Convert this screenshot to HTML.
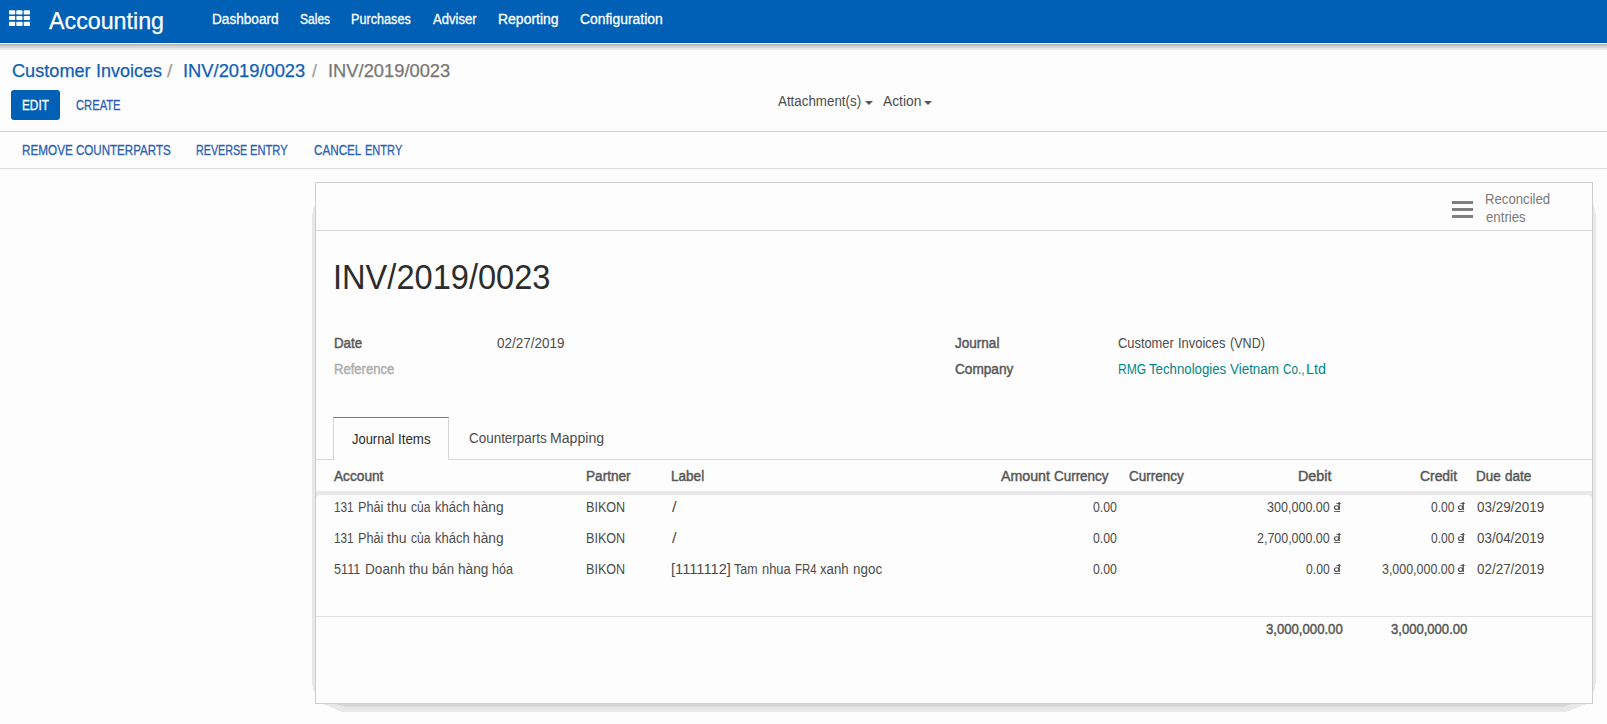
<!DOCTYPE html>
<html>
<head>
<meta charset="utf-8">
<title>INV/2019/0023 - Odoo</title>
<style>
html,body{margin:0;padding:0;}
body{width:1607px;height:724px;overflow:hidden;background:#fdfdfd;font-family:"Liberation Sans",sans-serif;font-size:13px;color:#4c4c4c;position:relative;}
.t{position:absolute;white-space:nowrap;line-height:1;transform-origin:0 0;}
.nav{-webkit-text-stroke:.3px #fff;}
.brand{-webkit-text-stroke:.25px #fff;}
.cap{-webkit-text-stroke:.3px currentColor;}
.bc{-webkit-text-stroke:.25px currentColor;}
.x{position:absolute;}
#nav{left:0;top:0;width:1607px;height:43px;background:#0060b6;}
#navsh{left:0;top:43px;width:1607px;height:7px;background:linear-gradient(to bottom,#fff 0,#fff 1px,#b4b4b4 1px,#b4b4b4 2px,#c6c6c6 2px,#c6c6c6 3px,#d5d5d5 3px,#d7d7d7 5px,#e7e7e7 5px,#ececec 7px);}
.hl{position:absolute;left:0;width:1607px;height:1px;}
.sl{position:absolute;height:1px;background:#d9d9d9;}
.car{position:absolute;width:0;height:0;border-left:4px solid transparent;border-right:4px solid transparent;border-top:4px solid #555;}
</style>
</head>
<body>
<!-- NAVBAR -->
<div class="x" id="nav"></div>
<div class="x" style="left:0;top:42px;width:1607px;height:1px;background:#0055ae"></div>
<div class="x" id="navsh"></div>
<svg class="x" style="left:9px;top:10px" width="22" height="17" viewBox="0 0 22 17">
  <g fill="#fff">
    <rect x="0" y="0.2" width="6.2" height="4.4" rx=".8"/><rect x="7.3" y="0.2" width="6.2" height="4.4" rx=".8"/><rect x="14.7" y="0.2" width="6.3" height="4.4" rx=".8"/>
    <rect x="0" y="6.1" width="6.2" height="3.9" rx=".8"/><rect x="7.3" y="6.1" width="6.2" height="3.9" rx=".8"/><rect x="14.7" y="6.1" width="6.3" height="3.9" rx=".8"/>
    <rect x="0" y="11.7" width="6.2" height="4.4" rx=".8"/><rect x="7.3" y="11.7" width="6.2" height="4.4" rx=".8"/><rect x="14.7" y="11.7" width="6.3" height="4.4" rx=".8"/>
  </g>
</svg>

<!-- CONTROL PANEL -->
<div class="x" style="left:11px;top:90px;width:49px;height:30px;background:#0060b6;border-radius:3px"></div>
<div class="car" style="left:865px;top:101px"></div>
<div class="car" style="left:924px;top:101px"></div>
<div class="hl" style="top:131px;background:#cdcdcd"></div>
<div class="hl" style="top:168px;background:#dedede"></div>

<!-- SHEET shadows -->
<svg class="x" style="left:300px;top:190px" width="1307" height="534" viewBox="300 190 1307 534" shape-rendering="crispEdges">
  <polygon fill="#e8e8e8" points="315,205 315,692 314,692 312,682 312,215 314,206"/>
  <polygon fill="#e8e8e8" points="1593,205 1593,692 1594,692 1596,682 1596,215 1594,206"/>
  <polygon fill="#e8e8e8" points="323,704 1586,704 1566,712 342,712"/>
  <polygon fill="#d6d6d6" points="335,704 1573,704 1562,707 346,707"/>
</svg>
<!-- SHEET -->
<div class="x" style="left:315px;top:182px;width:1276px;height:520px;border:1px solid #cdcdcd;background:#fdfdfd"></div>
<div class="sl" style="left:316px;top:230px;width:1276px"></div>

<!-- stat button icon -->
<div class="x" style="left:1452px;top:201px;width:21px;height:3px;background:#7f7f7f"></div>
<div class="x" style="left:1452px;top:208px;width:21px;height:3px;background:#7f7f7f"></div>
<div class="x" style="left:1452px;top:215px;width:21px;height:3px;background:#7f7f7f"></div>

<!-- tabs -->
<div class="sl" style="left:316px;top:459px;width:1276px"></div>
<div class="x" style="left:333px;top:417px;width:116px;height:43px;border:1px solid #d6d6d6;border-top-color:#8f6d8a;border-bottom:none;background:#fdfdfd;box-sizing:border-box"></div>

<!-- table -->
<div class="x" style="left:316px;top:491px;width:1276px;height:4px;background:#e9e9e9"></div>
<div class="x" style="left:316px;top:495px;width:5px;height:3px;background:#e9e9e9"></div>
<div class="x" style="left:316px;top:495px;width:12px;height:6px;background:#fdfdfd;border-top-left-radius:5px 3px"></div>
<div class="x" style="left:1587px;top:495px;width:5px;height:3px;background:#e9e9e9"></div>
<div class="x" style="left:1580px;top:495px;width:12px;height:6px;background:#fdfdfd;border-top-right-radius:5px 3px"></div>
<div class="sl" style="left:316px;top:616px;width:1276px;background:#e2e2e2"></div>

<div class="t brand" style="left:49.30px;top:7px;font-size:24px;line-height:27px;color:#fff;transform:scaleX(0.9685)">Accounting</div>
<div class="t nav" style="left:212.43px;top:11px;font-size:14px;line-height:16px;color:#fff;transform:scaleX(0.9715)">Dashboard</div>
<div class="t nav" style="left:300.10px;top:11px;font-size:14px;line-height:16px;color:#fff;transform:scaleX(0.8595)">Sales</div>
<div class="t nav" style="left:351.10px;top:11px;font-size:14px;line-height:16px;color:#fff;transform:scaleX(0.9041)">Purchases</div>
<div class="t nav" style="left:433.00px;top:11px;font-size:14px;line-height:16px;color:#fff;transform:scaleX(0.9336)">Adviser</div>
<div class="t nav" style="left:497.70px;top:11px;font-size:14px;line-height:16px;color:#fff;transform:scaleX(0.9980)">Reporting</div>
<div class="t nav" style="left:579.60px;top:11px;font-size:14px;line-height:16px;color:#fff;transform:scaleX(0.9929)">Configuration</div>
<div class="t bc" style="left:12.40px;top:60px;font-size:18.4px;line-height:21px;color:#1060b2;transform:scaleX(0.9863)">Customer</div>
<div class="t bc" style="left:95.62px;top:60px;font-size:18.4px;line-height:21px;color:#1060b2;transform:scaleX(0.9763)">Invoices</div>
<div class="t bc" style="left:167.20px;top:60px;font-size:18.4px;line-height:21px;color:#a0a0a0;transform:scaleX(1.0500)">/</div>
<div class="t bc" style="left:183.20px;top:60px;font-size:18.4px;line-height:21px;color:#1060b2;transform:scaleX(0.9961)">INV/2019/0023</div>
<div class="t bc" style="left:311.60px;top:60px;font-size:18.4px;line-height:21px;color:#a0a0a0;transform:scaleX(0.9667)">/</div>
<div class="t bc" style="left:327.60px;top:60px;font-size:18.4px;line-height:21px;color:#777;transform:scaleX(0.9961)">INV/2019/0023</div>
<div class="t cap" style="left:22.06px;top:97px;font-size:14px;line-height:16px;color:#fff;transform:scaleX(0.8424)">EDIT</div>
<div class="t cap" style="left:75.70px;top:97px;font-size:14px;line-height:16px;color:#2a5fb4;transform:scaleX(0.7995)">CREATE</div>
<div class="t" style="left:778.30px;top:93px;font-size:14px;line-height:16px;color:#4c4c4c;transform:scaleX(0.9540)">Attachment(s)</div>
<div class="t" style="left:883.20px;top:93px;font-size:14px;line-height:16px;color:#4c4c4c;transform:scaleX(0.9863)">Action</div>
<div class="t cap" style="left:22.26px;top:142px;font-size:14px;line-height:16px;color:#2a5fb4;transform:scaleX(0.8393)">REMOVE</div>
<div class="t cap" style="left:76.20px;top:142px;font-size:14px;line-height:16px;color:#2a5fb4;transform:scaleX(0.8261)">COUNTERPARTS</div>
<div class="t cap" style="left:195.83px;top:142px;font-size:14px;line-height:16px;color:#2a5fb4;transform:scaleX(0.7656)">REVERSE</div>
<div class="t cap" style="left:250.10px;top:142px;font-size:14px;line-height:16px;color:#2a5fb4;transform:scaleX(0.7982)">ENTRY</div>
<div class="t cap" style="left:313.90px;top:142px;font-size:14px;line-height:16px;color:#2a5fb4;transform:scaleX(0.8332)">CANCEL</div>
<div class="t cap" style="left:364.81px;top:142px;font-size:14px;line-height:16px;color:#2a5fb4;transform:scaleX(0.7896)">ENTRY</div>
<div class="t" style="left:1485.06px;top:191px;font-size:14px;line-height:16px;color:#7a7a7a;transform:scaleX(0.9411)">Reconciled</div>
<div class="t" style="left:1485.70px;top:209px;font-size:14px;line-height:16px;color:#7a7a7a;transform:scaleX(0.9448)">entries</div>
<div class="t" style="left:332.97px;top:258px;font-size:34.6px;line-height:38px;color:#2c2c2c;transform:scaleX(0.9427)">INV/2019/0023</div>
<div class="t" style="left:333.50px;top:335px;font-size:14px;line-height:16px;color:#575757;transform:scaleX(0.9518);-webkit-text-stroke:.45px #575757">Date</div>
<div class="t" style="left:497.20px;top:335px;font-size:14px;line-height:16px;color:#4c4c4c;transform:scaleX(0.9633)">02/27/2019</div>
<div class="t" style="left:333.52px;top:361px;font-size:14px;line-height:16px;color:#adadad;transform:scaleX(0.9325);-webkit-text-stroke:.45px #adadad">Reference</div>
<div class="t" style="left:954.65px;top:335px;font-size:14px;line-height:16px;color:#575757;transform:scaleX(0.9671);-webkit-text-stroke:.45px #575757">Journal</div>
<div class="t" style="left:1118.30px;top:335px;font-size:14px;line-height:16px;color:#4c4c4c;transform:scaleX(0.9194)">Customer</div>
<div class="t" style="left:1178.07px;top:335px;font-size:14px;line-height:16px;color:#4c4c4c;transform:scaleX(0.9254)">Invoices</div>
<div class="t" style="left:1229.90px;top:335px;font-size:14px;line-height:16px;color:#4c4c4c;transform:scaleX(0.9000)">(VND)</div>
<div class="t" style="left:954.65px;top:361px;font-size:14px;line-height:16px;color:#575757;transform:scaleX(0.9730);-webkit-text-stroke:.45px #575757">Company</div>
<div class="t" style="left:1118.04px;top:361px;font-size:14px;line-height:16px;color:#00868a;transform:scaleX(0.8644)">RMG</div>
<div class="t" style="left:1149.40px;top:361px;font-size:14px;line-height:16px;color:#00868a;transform:scaleX(0.9446)">Technologies</div>
<div class="t" style="left:1229.90px;top:361px;font-size:14px;line-height:16px;color:#00868a;transform:scaleX(0.9575)">Vietnam</div>
<div class="t" style="left:1282.50px;top:361px;font-size:14px;line-height:16px;color:#00868a;transform:scaleX(0.8351)">Co.,</div>
<div class="t" style="left:1306.48px;top:361px;font-size:14px;line-height:16px;color:#00868a;transform:scaleX(1.0240)">Ltd</div>
<div class="t" style="left:352.40px;top:431px;font-size:14px;line-height:16px;color:#2c2c2c;transform:scaleX(0.9234)">Journal</div>
<div class="t" style="left:398.25px;top:431px;font-size:14px;line-height:16px;color:#2c2c2c;transform:scaleX(0.9510)">Items</div>
<div class="t" style="left:469.30px;top:430px;font-size:14px;line-height:16px;color:#4c4c4c;transform:scaleX(0.9601)">Counterparts</div>
<div class="t" style="left:549.99px;top:430px;font-size:14px;line-height:16px;color:#4c4c4c;transform:scaleX(1.0074)">Mapping</div>
<div class="t" style="left:334.45px;top:468px;font-size:14px;line-height:16px;color:#575757;transform:scaleX(0.9764);-webkit-text-stroke:.45px #575757">Account</div>
<div class="t" style="left:586.38px;top:468px;font-size:14px;line-height:16px;color:#575757;transform:scaleX(0.9724);-webkit-text-stroke:.45px #575757">Partner</div>
<div class="t" style="left:671.48px;top:468px;font-size:14px;line-height:16px;color:#575757;transform:scaleX(0.9685);-webkit-text-stroke:.45px #575757">Label</div>
<div class="t" style="left:1000.85px;top:468px;font-size:14px;line-height:16px;color:#575757;transform:scaleX(1.0133);-webkit-text-stroke:.45px #575757">Amount</div>
<div class="t" style="left:1054.05px;top:468px;font-size:14px;line-height:16px;color:#575757;transform:scaleX(0.9596);-webkit-text-stroke:.45px #575757">Currency</div>
<div class="t" style="left:1129.05px;top:468px;font-size:14px;line-height:16px;color:#575757;transform:scaleX(0.9649);-webkit-text-stroke:.45px #575757">Currency</div>
<div class="t" style="left:1297.82px;top:468px;font-size:14px;line-height:16px;color:#575757;transform:scaleX(1.0254);-webkit-text-stroke:.45px #575757">Debit</div>
<div class="t" style="left:1419.65px;top:468px;font-size:14px;line-height:16px;color:#575757;transform:scaleX(0.9905);-webkit-text-stroke:.45px #575757">Credit</div>
<div class="t" style="left:1476.39px;top:468px;font-size:14px;line-height:16px;color:#575757;transform:scaleX(0.9600);-webkit-text-stroke:.45px #575757">Due</div>
<div class="t" style="left:1505.25px;top:468px;font-size:14px;line-height:16px;color:#575757;transform:scaleX(0.9650);-webkit-text-stroke:.45px #575757">date</div>
<div class="t" style="left:1265.75px;top:621px;font-size:14px;line-height:16px;color:#575757;transform:scaleX(0.9383);-webkit-text-stroke:.45px #575757">3,000,000.00</div>
<div class="t" style="left:1390.75px;top:621px;font-size:14px;line-height:16px;color:#575757;transform:scaleX(0.9334);-webkit-text-stroke:.45px #575757">3,000,000.00</div>
<div class="t" style="left:333.56px;top:499px;font-size:14px;line-height:16px;color:#4c4c4c;transform:scaleX(0.8417)">131</div>
<div class="t" style="left:357.99px;top:499px;font-size:14px;line-height:16px;color:#4c4c4c;transform:scaleX(0.9067)">Phải</div>
<div class="t" style="left:387.00px;top:499px;font-size:14px;line-height:16px;color:#4c4c4c;transform:scaleX(1.0013)">thu</div>
<div class="t" style="left:410.60px;top:499px;font-size:14px;line-height:16px;color:#4c4c4c;transform:scaleX(0.8602)">của</div>
<div class="t" style="left:434.90px;top:499px;font-size:14px;line-height:16px;color:#4c4c4c;transform:scaleX(0.9269)">khách</div>
<div class="t" style="left:473.40px;top:499px;font-size:14px;line-height:16px;color:#4c4c4c;transform:scaleX(0.9816)">hàng</div>
<div class="t" style="left:671.80px;top:499px;font-size:14px;line-height:16px;color:#4c4c4c;transform:scaleX(1.1750)">/</div>
<div class="t" style="left:586.00px;top:499px;font-size:14px;line-height:16px;color:#4c4c4c;transform:scaleX(0.8998)">BIKON</div>
<div class="t" style="left:1093.30px;top:499px;font-size:14px;line-height:16px;color:#4c4c4c;transform:scaleX(0.8776)">0.00</div>
<div class="t" style="left:1266.70px;top:499px;font-size:14px;line-height:16px;color:#4c4c4c;transform:scaleX(0.8964)">300,000.00</div>
<div class="t" style="left:1430.70px;top:499px;font-size:14px;line-height:16px;color:#4c4c4c;transform:scaleX(0.8594)">0.00</div>
<div class="t" style="left:1476.70px;top:499px;font-size:14px;line-height:16px;color:#4c4c4c;transform:scaleX(0.9590)">03/29/2019</div>
<div class="t" style="left:333.56px;top:530px;font-size:14px;line-height:16px;color:#4c4c4c;transform:scaleX(0.8417)">131</div>
<div class="t" style="left:357.99px;top:530px;font-size:14px;line-height:16px;color:#4c4c4c;transform:scaleX(0.9067)">Phải</div>
<div class="t" style="left:387.00px;top:530px;font-size:14px;line-height:16px;color:#4c4c4c;transform:scaleX(1.0013)">thu</div>
<div class="t" style="left:410.60px;top:530px;font-size:14px;line-height:16px;color:#4c4c4c;transform:scaleX(0.8602)">của</div>
<div class="t" style="left:434.90px;top:530px;font-size:14px;line-height:16px;color:#4c4c4c;transform:scaleX(0.9269)">khách</div>
<div class="t" style="left:473.40px;top:530px;font-size:14px;line-height:16px;color:#4c4c4c;transform:scaleX(0.9816)">hàng</div>
<div class="t" style="left:671.80px;top:530px;font-size:14px;line-height:16px;color:#4c4c4c;transform:scaleX(1.1750)">/</div>
<div class="t" style="left:586.00px;top:530px;font-size:14px;line-height:16px;color:#4c4c4c;transform:scaleX(0.8998)">BIKON</div>
<div class="t" style="left:1093.30px;top:530px;font-size:14px;line-height:16px;color:#4c4c4c;transform:scaleX(0.8776)">0.00</div>
<div class="t" style="left:1256.80px;top:530px;font-size:14px;line-height:16px;color:#4c4c4c;transform:scaleX(0.8895)">2,700,000.00</div>
<div class="t" style="left:1430.70px;top:530px;font-size:14px;line-height:16px;color:#4c4c4c;transform:scaleX(0.8594)">0.00</div>
<div class="t" style="left:1476.70px;top:530px;font-size:14px;line-height:16px;color:#4c4c4c;transform:scaleX(0.9590)">03/04/2019</div>
<div class="t" style="left:334.40px;top:561px;font-size:14px;line-height:16px;color:#4c4c4c;transform:scaleX(0.9050)">5111</div>
<div class="t" style="left:365.33px;top:561px;font-size:14px;line-height:16px;color:#4c4c4c;transform:scaleX(0.9729)">Doanh</div>
<div class="t" style="left:408.80px;top:561px;font-size:14px;line-height:16px;color:#4c4c4c;transform:scaleX(0.9906)">thu</div>
<div class="t" style="left:432.30px;top:561px;font-size:14px;line-height:16px;color:#4c4c4c;transform:scaleX(0.9392)">bán</div>
<div class="t" style="left:458.20px;top:561px;font-size:14px;line-height:16px;color:#4c4c4c;transform:scaleX(0.9750)">hàng</div>
<div class="t" style="left:491.80px;top:561px;font-size:14px;line-height:16px;color:#4c4c4c;transform:scaleX(0.8951)">hóa</div>
<div class="t" style="left:671.15px;top:561px;font-size:14px;line-height:16px;color:#4c4c4c;transform:scaleX(1.0490)">[1111112]</div>
<div class="t" style="left:734.40px;top:561px;font-size:14px;line-height:16px;color:#4c4c4c;transform:scaleX(0.8881)">Tam</div>
<div class="t" style="left:762.30px;top:561px;font-size:14px;line-height:16px;color:#4c4c4c;transform:scaleX(0.9216)">nhua</div>
<div class="t" style="left:794.69px;top:561px;font-size:14px;line-height:16px;color:#4c4c4c;transform:scaleX(0.8144)">FR4</div>
<div class="t" style="left:820.30px;top:561px;font-size:14px;line-height:16px;color:#4c4c4c;transform:scaleX(0.9435)">xanh</div>
<div class="t" style="left:853.20px;top:561px;font-size:14px;line-height:16px;color:#4c4c4c;transform:scaleX(0.9585)">ngoc</div>
<div class="t" style="left:586.00px;top:561px;font-size:14px;line-height:16px;color:#4c4c4c;transform:scaleX(0.8998)">BIKON</div>
<div class="t" style="left:1093.30px;top:561px;font-size:14px;line-height:16px;color:#4c4c4c;transform:scaleX(0.8776)">0.00</div>
<div class="t" style="left:1305.80px;top:561px;font-size:14px;line-height:16px;color:#4c4c4c;transform:scaleX(0.8703)">0.00</div>
<div class="t" style="left:1381.50px;top:561px;font-size:14px;line-height:16px;color:#4c4c4c;transform:scaleX(0.8883)">3,000,000.00</div>
<div class="t" style="left:1476.70px;top:561px;font-size:14px;line-height:16px;color:#4c4c4c;transform:scaleX(0.9590)">02/27/2019</div>
<svg class="x" style="left:1333px;top:501px" width="9" height="12" viewBox="0 0 9 12"><g fill="#4e4e4e"><rect x="5.5" y="1" width="1.35" height="8.1"/><rect x="3.4" y="2.05" width="4.4" height="0.9"/><rect x="1.1" y="10.05" width="6" height="0.9"/></g><ellipse cx="3.6" cy="6.6" rx="2.2" ry="1.9" fill="none" stroke="#4e4e4e" stroke-width="1.15"/></svg>
<svg class="x" style="left:1457.4px;top:501px" width="9" height="12" viewBox="0 0 9 12"><g fill="#4e4e4e"><rect x="5.5" y="1" width="1.35" height="8.1"/><rect x="3.4" y="2.05" width="4.4" height="0.9"/><rect x="1.1" y="10.05" width="6" height="0.9"/></g><ellipse cx="3.6" cy="6.6" rx="2.2" ry="1.9" fill="none" stroke="#4e4e4e" stroke-width="1.15"/></svg>
<svg class="x" style="left:1333px;top:532px" width="9" height="12" viewBox="0 0 9 12"><g fill="#4e4e4e"><rect x="5.5" y="1" width="1.35" height="8.1"/><rect x="3.4" y="2.05" width="4.4" height="0.9"/><rect x="1.1" y="10.05" width="6" height="0.9"/></g><ellipse cx="3.6" cy="6.6" rx="2.2" ry="1.9" fill="none" stroke="#4e4e4e" stroke-width="1.15"/></svg>
<svg class="x" style="left:1457.4px;top:532px" width="9" height="12" viewBox="0 0 9 12"><g fill="#4e4e4e"><rect x="5.5" y="1" width="1.35" height="8.1"/><rect x="3.4" y="2.05" width="4.4" height="0.9"/><rect x="1.1" y="10.05" width="6" height="0.9"/></g><ellipse cx="3.6" cy="6.6" rx="2.2" ry="1.9" fill="none" stroke="#4e4e4e" stroke-width="1.15"/></svg>
<svg class="x" style="left:1333px;top:563px" width="9" height="12" viewBox="0 0 9 12"><g fill="#4e4e4e"><rect x="5.5" y="1" width="1.35" height="8.1"/><rect x="3.4" y="2.05" width="4.4" height="0.9"/><rect x="1.1" y="10.05" width="6" height="0.9"/></g><ellipse cx="3.6" cy="6.6" rx="2.2" ry="1.9" fill="none" stroke="#4e4e4e" stroke-width="1.15"/></svg>
<svg class="x" style="left:1457.4px;top:563px" width="9" height="12" viewBox="0 0 9 12"><g fill="#4e4e4e"><rect x="5.5" y="1" width="1.35" height="8.1"/><rect x="3.4" y="2.05" width="4.4" height="0.9"/><rect x="1.1" y="10.05" width="6" height="0.9"/></g><ellipse cx="3.6" cy="6.6" rx="2.2" ry="1.9" fill="none" stroke="#4e4e4e" stroke-width="1.15"/></svg>
</body>
</html>
